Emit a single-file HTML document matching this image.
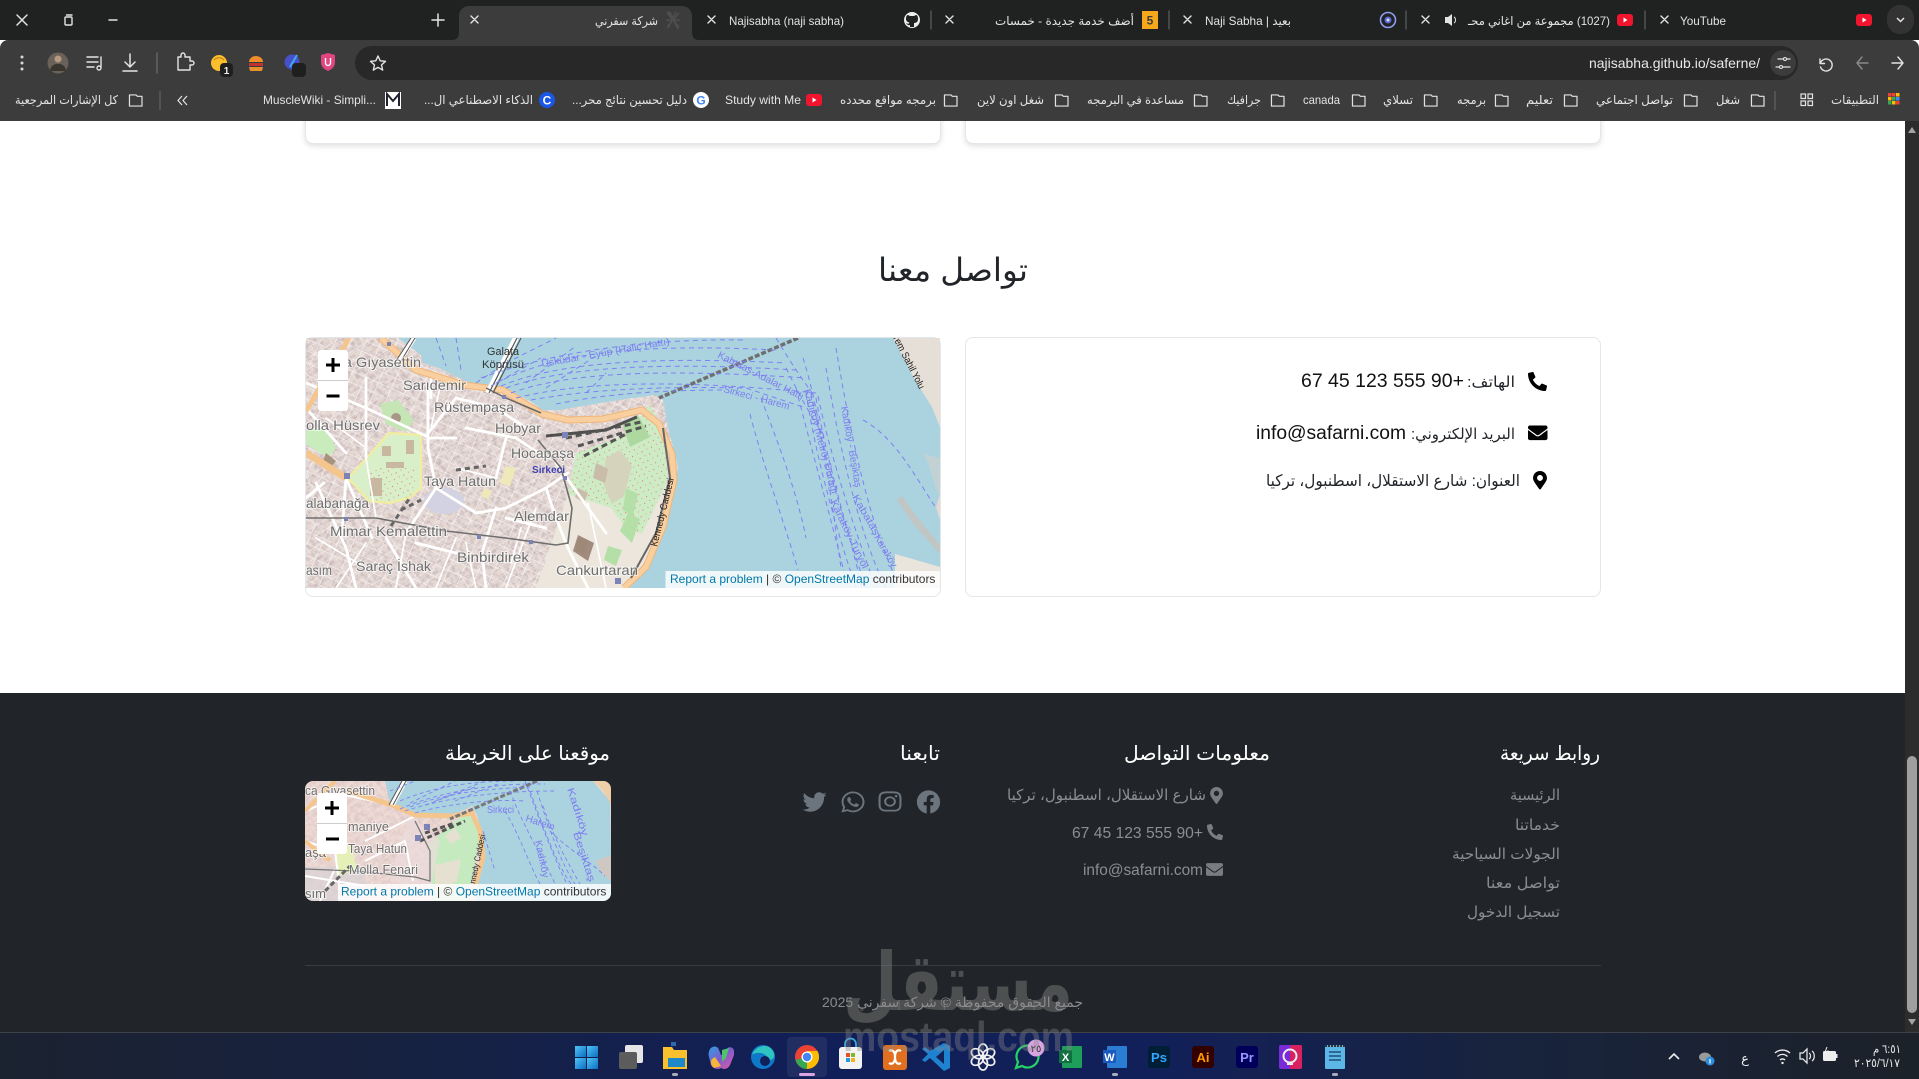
<!DOCTYPE html>
<html lang="ar"><head><meta charset="utf-8"><title>شركة سفرني</title>
<style>
html,body{margin:0;padding:0;width:1919px;height:1079px;overflow:hidden;background:#fff}
body{position:relative;font-family:"Liberation Sans","DejaVu Sans",sans-serif}
.a{position:absolute}
svg text{font-family:"Liberation Sans","DejaVu Sans",sans-serif}
.r{direction:rtl}
.card{position:absolute;background:#fff;border:1px solid #e3e6ea;border-radius:8px;box-sizing:border-box}
.lb{font-size:14px;fill:#6e6e6e;paint-order:stroke;stroke:rgba(255,255,255,.6);stroke-width:2px}
.fr{font-size:10px;fill:#7d7df0}
.rd{fill:none;stroke:#fff;stroke-linecap:round}
.fl{fill:none;stroke:#8080f2;stroke-width:1;stroke-dasharray:5 4}
.bm{font-size:12px;fill:#e3e3e3}
.tb{font-size:12px;fill:#e3e3e3}
.ic{fill:none;stroke:#e3e3e3;stroke-width:1.4;stroke-linecap:round;stroke-linejoin:round}
</style></head><body>

<svg width="0" height="0" class="a"><defs>
<filter id="noi" x="0" y="0" width="100%" height="100%"><feTurbulence type="fractalNoise" baseFrequency=".22" numOctaves="3" seed="7"/><feColorMatrix values="0 0 0 0 .52  0 0 0 0 .42  0 0 0 0 .44  2.600 0 0 0 -1.050"/></filter>
<pattern id="grd" width="14" height="11" patternUnits="userSpaceOnUse" patternTransform="rotate(24)"><path d="M0 0H14M0 0V11" stroke="#fff" stroke-width="1.300" fill="none"/></pattern>
<pattern id="grd2" width="19" height="9" patternUnits="userSpaceOnUse" patternTransform="rotate(-33)"><path d="M0 0H19M0 0V9" stroke="#fff" stroke-width="1" fill="none"/></pattern>
<pattern id="dot" width="8" height="7" patternUnits="userSpaceOnUse" patternTransform="rotate(15)"><circle cx="2" cy="2" r=".6" fill="#e8766e"/><circle cx="6" cy="5" r=".5" fill="#e8766e"/></pattern>
<symbol id="fo" viewBox="0 0 16 14"><path d="M15 2.500H10L8.500 1H1.500V13H15z" fill="none" stroke="#e3e3e3" stroke-width="1.300" stroke-linejoin="round"/></symbol>
<symbol id="yt" viewBox="0 0 16 12"><rect width="16" height="12" rx="3" fill="#f0142f"/><path d="M6.500 3.500v5l4-2.500z" fill="#fff"/></symbol>
<symbol id="ph" viewBox="0 0 512 512"><path transform="matrix(-1 0 0 1 512 0)" d="M493.400 24.600l-104-24c-11.300-2.600-22.900 3.300-27.500 13.900l-48 112c-4.200 9.800-1.400 21.300 6.900 28l60.600 49.600c-36 76.700-98.900 140.500-177.200 177.200l-49.600-60.600c-6.800-8.300-18.200-11.100-28-6.900l-112 48C3.900 366.500-2 378.100.6 389.400l24 104C27.100 504.200 36.700 512 48 512c256.100 0 464-207.500 464-464 0-11.200-7.700-20.900-18.600-23.400z"/></symbol>
<symbol id="en" viewBox="0 0 512 512"><path d="M502.300 190.800c3.900-3.100 9.700-.2 9.700 4.700V400c0 26.500-21.500 48-48 48H48c-26.500 0-48-21.500-48-48V195.600c0-5 5.700-7.800 9.700-4.700 22.400 17.400 52.100 39.500 154.100 113.600 21.100 15.400 56.700 47.800 92.200 47.600 35.700.3 72-32.800 92.300-47.600 102-74.100 131.600-96.300 154-113.700zM256 320c23.200.4 56.600-29.200 73.400-41.400 132.700-96.300 142.800-104.700 173.400-128.700 5.800-4.500 9.200-11.500 9.200-18.900v-19c0-26.500-21.500-48-48-48H48C21.500 64 0 85.500 0 112v19c0 7.400 3.400 14.300 9.200 18.900 30.600 23.900 40.700 32.400 173.400 128.700 16.800 12.200 50.200 41.800 73.400 41.400z"/></symbol>
<symbol id="pi" viewBox="0 0 384 512"><path d="M172.268 501.670C26.970 291.031 0 262.413 0 192 0 85.961 85.961 0 192 0s192 85.961 192 192c0 70.413-26.970 99.031-172.268 309.670-9.535 13.774-29.930 13.773-39.464 0zM192 272c44.183 0 80-35.817 80-80s-35.817-80-80-80-80 35.817-80 80 35.817 80 80 80z"/></symbol>
</defs></svg>

<!-- PAGE -->
<div class="card" style="left:305px;top:90px;width:636px;height:54px;box-shadow:0 2px 6px rgba(0,0,0,.13)"></div>
<div class="card" style="left:965px;top:90px;width:636px;height:54px;box-shadow:0 2px 6px rgba(0,0,0,.13)"></div>
<div class="card" style="left:305px;top:337px;width:636px;height:260px"></div>
<div class="card" style="left:965px;top:337px;width:636px;height:260px"></div>
<div class="a" style="left:0;top:693px;width:1905px;height:340px;background:#212529"></div>
<div class="a" style="left:305px;top:965px;width:1296px;height:1px;background:#383b40"></div>

<!-- MAIN MAP -->
<svg class="a" style="left:306px;top:338px" width="634" height="250" viewBox="0 0 634 250">
<defs><clipPath id="cm"><rect width="634" height="250"/></clipPath></defs>
<g clip-path="url(#cm)">
<rect width="634" height="250" fill="#e6d9d4"/>
<rect width="380" height="250" filter="url(#noi)" opacity=".75"/>
<rect width="380" height="250" fill="url(#grd)" opacity=".7"/>
<rect width="380" height="250" fill="url(#grd2)" opacity=".55"/>
<path d="M92 0L115 17 117 25 133 30 160 43 180 50 200 50 227 65 237 72 253 72 283 67 313 62 349 57 357 62 362 89 372 129 362 182 344 222 323 250H589V216L634 229V182L630 169 634 156V89L626 69 609 42 587 0z" fill="#aad3df"/>
<path d="M589 216L634 229V250H589z" fill="#e9e4dc"/>
<path d="M618 116l5 12 6 20 5 10V120z" fill="#d8d0ca" opacity=".5"/>
<path d="M591 162L604 182 630 212 634 216 634 207 620 190 606 172 596 158z" fill="#c8c0ba" opacity=".75"/>
<path d="M587 0L609 42 626 69 634 89V0z" fill="#e6dfd8"/>
<path d="M320 250L345 215 362 175 360 140 345 100 300 120 262 156 230 250z" fill="#ece6dc"/>
<path d="M344 66L357 92 362 142 336 196 320 190 305 170 262 156 270 115 322 96z" fill="#cdecc6"/>
<path d="M344 66L357 92 362 142 336 196 320 190 305 170 262 156 270 115 322 96z" fill="url(#dot)"/>
<path d="M300 120l14-8 12 16-8 30-12 8-10-24z" fill="#d6d3bd"/>
<path d="M316 85l16-8 12 22-20 10z" fill="#add8a0"/>
<path d="M290 125l12 6-3 14-12-5zM272 150l10 5-4 10-9-6z" fill="#c9bca8"/>
<path d="M322 175l12 6-8 24-12-12zM302 208l14 4-6 16-12-6zM320 150l12 6-5 22-10-6z" fill="#b4dfa6"/>
<path d="M272 197l16 8-6 18-15-10z" fill="#a08b7e"/>
<path d="M0 93l18-5 12 22-8 10-22-14z" fill="#c9ecbc"/>
<path d="M20 115l10 8-5 6-8-6z" fill="#a8937f"/>
<path d="M83 95L115 97 115 150 103 160 83 165 63 163 42 140 58 123z" fill="#d9efc9"/>
<path d="M60 130h50v26l-10 6-18 2-18-2z" fill="url(#dot)"/>
<path d="M76 108h9v10h-9zM100 102h8v14h-8zM80 124h18v6H80zM64 140h12v18H64z" fill="#c8b8a2"/>
<path d="M83 95L115 97 115 150 103 160 83 165 63 163 42 140 58 123z" fill="none" stroke="#f2ee9e" stroke-width="2.200"/>
<path d="M74 66l18-4 16 20-8 12-20-8z" fill="#c5e6b4"/>
<circle cx="90" cy="80" r="5" fill="#a89686"/>
<ellipse cx="138" cy="163" rx="20" ry="13" fill="#d2d2e2"/>
<path d="M200 128l10 2-6 18-10-3zM178 150l8 3-4 8-7-3z" fill="#efe8b8"/>
<path d="M272 200l10 2-4 14-8-4z" fill="#9f8878"/>
<g class="rd">
<path d="M0 45L60 70 120 98 150 60 190 70 220 90M60 40L60 120M122 50L122 110 130 150 100 195M0 70L40 115M10 145L40 210 50 250M40 140L36 195M130 150L170 175 200 170 240 150 262 135M190 170L176 215 180 250M240 150L250 180 262 210 282 250M160 90L210 100 240 120M200 180L240 190M80 200L110 250M110 205L150 215M200 100L190 140M18 145L0 160M250 125L300 195M40 140L66 200M125 60L125 40M122 100L150 100" stroke-width="2.800"/>
<path d="M10 200L60 230M60 205L30 250M150 200L130 250M230 170L200 250M282 165L300 250M135 45L125 90M20 80L60 110M150 130L190 140M215 190L205 225M70 180L60 120M100 195L90 250M160 205L170 250" stroke-width="1.700"/>
</g>
<path d="M75 0L110 32 158 47 197 52 236 76 262 82 297 81 336 72 353 86 366 116 368 142 357 189 340 229 318 250" fill="none" stroke="#efb678" stroke-width="7"/>
<path d="M75 0L110 32 158 47 197 52 236 76 262 82 297 81 336 72 353 86 366 116 368 142 357 189 340 229 318 250" fill="none" stroke="#f9cf9f" stroke-width="5"/>
<path d="M0 115L40 140" stroke="#f4c58c" stroke-width="7"/>
<path d="M43 0L0 73" stroke="#f4c58c" stroke-width="5"/>
<path d="M210 0L182 55" stroke="#fff" stroke-width="6"/><path d="M211 0L183 55M215 0L187 55" stroke="#555" stroke-width="1.200"/>
<path d="M108 0L90 28" stroke="#fff" stroke-width="5"/><path d="M105 0L88 26M109 0L92 28" stroke="#555" stroke-width="1"/>
<path d="M0 180L70 180 140 193 200 200 250 207 262 205 266 170 255 130 232 102" fill="none" stroke="#6f6f6f" stroke-width="1.600"/>
<path d="M180 50L200 60 235 75" fill="none" stroke="#666" stroke-width="1.500"/>
<path d="M357 90L364 140 350 195 325 240" fill="none" stroke="#666" stroke-width="2"/>
<path d="M492 0L353 60" stroke="#6f6f6f" stroke-width="3.500" stroke-dasharray="5 2"/>
<path d="M240 98L300 92 331 79" stroke="#4f4f4f" stroke-width="3" fill="none"/>
<path d="M260 100L335 84M272 108L340 88M278 118L320 96" stroke="#555" stroke-width="3" stroke-dasharray="6 4" fill="none"/>
<path d="M95 172l20-10M85 188l20-30M150 132l30-4" stroke="#666" stroke-width="3" stroke-dasharray="5 4" fill="none"/>
<rect x="38" y="135" width="6" height="6" fill="#7c83b6"/><rect x="38" y="179" width="4" height="4" fill="#7c83b6"/><rect x="256" y="94" width="6" height="6" fill="#7c83b6"/>
<rect x="257" y="138" width="4" height="4" fill="#7c83b6"/><rect x="196" y="57" width="4" height="4" fill="#7c83b6"/><rect x="171" y="197" width="4" height="4" fill="#7c83b6"/>
<rect x="223" y="202" width="4" height="4" fill="#7c83b6"/><rect x="309" y="240" width="6" height="6" fill="#7c83b6"/><rect x="81" y="4" width="4" height="4" fill="#7c83b6"/>
<g class="fl">
<path d="M190 45C250 15 330 5 470 12M195 48C250 25 340 18 480 25M205 55C260 35 350 30 500 40M210 60C270 45 360 40 510 55M225 62C280 52 350 48 440 50L500 70M250 66C290 58 340 52 420 52M175 40C230 20 320 0 440 2M200 50C260 28 360 24 490 32"/>
<path d="M130 0L140 28M150 0L155 32M170 45L200 25 250 0M185 48L235 20M220 45L270 8M280 55L300 35M240 50L290 18"/>
<path d="M444 76C455 120 480 190 492 232M455 60C470 100 490 150 500 200M500 55C510 120 530 190 550 250M505 55C518 120 540 190 560 250M512 58C525 120 548 190 570 250M520 30C530 90 550 190 580 250M530 10C540 70 560 180 590 240M497 20C510 60 520 120 535 230M480 30C490 50 505 80 520 100M470 0C485 25 495 40 510 60M557 82C590 100 610 140 630 170M510 60C522 130 545 200 556 250M490 50C505 110 525 180 542 250"/>
</g>
<text class="lb" x="38" y="29">a</text>
<text class="lb" x="50" y="29" textLength="65" lengthAdjust="spacingAndGlyphs">Gıyasettin</text>
<text class="lb" x="97" y="52" textLength="63" lengthAdjust="spacingAndGlyphs">Sarıdemir</text>
<text class="lb" x="128" y="74" textLength="80" lengthAdjust="spacingAndGlyphs">Rüstempaşa</text>
<text class="lb" x="0" y="92" textLength="74" lengthAdjust="spacingAndGlyphs">olla Hüsrev</text>
<text class="lb" x="189" y="95" textLength="46" lengthAdjust="spacingAndGlyphs">Hobyar</text>
<text class="lb" x="205" y="120" textLength="63" lengthAdjust="spacingAndGlyphs">Hocapaşa</text>
<text x="226" y="135" font-size="10.500" font-weight="bold" fill="#3f3fb0" textLength="33" lengthAdjust="spacingAndGlyphs">Sirkeci</text>
<text class="lb" x="118" y="148" textLength="72" lengthAdjust="spacingAndGlyphs">Taya Hatun</text>
<text class="lb" x="0" y="170" textLength="63" lengthAdjust="spacingAndGlyphs">alabanağa</text>
<text class="lb" x="208" y="183" textLength="55" lengthAdjust="spacingAndGlyphs">Alemdar</text>
<text class="lb" x="24" y="198" textLength="117" lengthAdjust="spacingAndGlyphs">Mimar Kemalettin</text>
<text class="lb" x="151" y="224" textLength="72" lengthAdjust="spacingAndGlyphs">Binbirdirek</text>
<text class="lb" x="50" y="233" textLength="75" lengthAdjust="spacingAndGlyphs">Saraç İshak</text>
<text class="lb" x="0" y="237" textLength="26" lengthAdjust="spacingAndGlyphs">asım</text>
<text class="lb" x="250" y="237" textLength="82" lengthAdjust="spacingAndGlyphs">Cankurtaran</text>
<text x="181" y="17" font-size="11" fill="#333" textLength="32" lengthAdjust="spacingAndGlyphs">Galata</text>
<text x="176" y="30" font-size="11" fill="#333" textLength="42" lengthAdjust="spacingAndGlyphs">Köprüsü</text>
<text class="fr" transform="translate(236 29) rotate(-10)" textLength="130" lengthAdjust="spacingAndGlyphs">Üsküdar - Eyüp (Haliç Hattı)</text>
<text class="fr" transform="translate(411 19) rotate(27)" textLength="95" lengthAdjust="spacingAndGlyphs">Kabataş-Adalar Hattı</text>
<text class="fr" transform="translate(417 54) rotate(15)" textLength="68" lengthAdjust="spacingAndGlyphs">Sirkeci - Harem</text>
<text class="fr" transform="translate(498 52) rotate(75)" textLength="108" lengthAdjust="spacingAndGlyphs">Kadıköy (Metro) Durağı</text>
<text class="fr" transform="translate(535 69) rotate(80)" textLength="82" lengthAdjust="spacingAndGlyphs">Kadıköy - Beşiktaş</text>
<text class="fr" transform="translate(546 159) rotate(60)" textLength="45" lengthAdjust="spacingAndGlyphs">Kabataş</text>
<text class="fr" transform="translate(568 199) rotate(60)" textLength="36" lengthAdjust="spacingAndGlyphs">Karaköy</text>
<text class="fr" transform="translate(524 164) rotate(64)" textLength="75" lengthAdjust="spacingAndGlyphs">Karaköy-Turyol</text>
<text transform="translate(351 209) rotate(-76)" font-size="10" fill="#222" textLength="70" lengthAdjust="spacingAndGlyphs">Kennedy Caddesi</text>
<text transform="translate(587 0) rotate(63)" font-size="10" fill="#222" textLength="58" lengthAdjust="spacingAndGlyphs">rem Sahil Yolu</text>
<rect x="359.500" y="233" width="275" height="17" fill="#fff" fill-opacity=".82"/>
<text x="364" y="245" font-size="12" fill="#333"><tspan fill="#0078a8">Report a problem</tspan> | © <tspan fill="#0078a8">OpenStreetMap</tspan> contributors</text>
<rect x="12" y="12" width="30" height="61" rx="3" fill="#fff"/>
<path d="M12 42.500h30" stroke="#ccc"/>
<path d="M27 20v14M20 27h14M20.500 58h13" stroke="#000" stroke-width="3"/>
</g></svg>

<!-- CONTACT CARD + FOOTER TEXT -->
<svg class="a" style="left:0;top:0;pointer-events:none" width="1919" height="1033" viewBox="0 0 1919 1033">
<text x="1028" y="281" text-anchor="start" class="r" font-size="32" fill="#212529" textLength="150" lengthAdjust="spacingAndGlyphs">تواصل معنا</text>
<use href="#ph" x="1528" y="372" width="19" height="19" fill="#000"/>
<text x="1515" y="387" class="r" font-size="15" fill="#212529" textLength="48" lengthAdjust="spacingAndGlyphs">الهاتف:</text>
<text x="1464" y="387" class="r" font-size="19" fill="#111" textLength="163" lengthAdjust="spacingAndGlyphs">+90 555 123 45 67</text>
<use href="#en" x="1528" y="423" width="19.500" height="19.500" fill="#000"/>
<text x="1515" y="439" class="r" font-size="15" fill="#212529" textLength="104" lengthAdjust="spacingAndGlyphs">البريد الإلكتروني:</text>
<text x="1256" y="439" font-size="19" fill="#111" textLength="150" lengthAdjust="spacingAndGlyphs">info@safarni.com</text>
<use href="#pi" x="1533" y="471" width="14" height="18.500" fill="#000"/>
<text x="1520" y="486" class="r" font-size="16" fill="#212529" textLength="254" lengthAdjust="spacingAndGlyphs">العنوان: شارع الاستقلال، اسطنبول، تركيا</text>

<g fill="#fff" font-size="20">
<text x="1600" y="760" class="r" textLength="100" lengthAdjust="spacingAndGlyphs">روابط سريعة</text>
<text x="1270" y="760" class="r" textLength="146" lengthAdjust="spacingAndGlyphs">معلومات التواصل</text>
<text x="940" y="760" class="r" textLength="40" lengthAdjust="spacingAndGlyphs">تابعنا</text>
<text x="610" y="760" class="r" textLength="165" lengthAdjust="spacingAndGlyphs">موقعنا على الخريطة</text>
</g>
<g fill="#8b8e91" font-size="15">
<text x="1560" y="800" class="r" textLength="50" lengthAdjust="spacingAndGlyphs">الرئيسية</text>
<text x="1560" y="830" class="r" textLength="45" lengthAdjust="spacingAndGlyphs">خدماتنا</text>
<text x="1560" y="859" class="r" textLength="108" lengthAdjust="spacingAndGlyphs">الجولات السياحية</text>
<text x="1560" y="888" class="r" textLength="74" lengthAdjust="spacingAndGlyphs">تواصل معنا</text>
<text x="1560" y="917" class="r" textLength="93" lengthAdjust="spacingAndGlyphs">تسجيل الدخول</text>
<text x="1206" y="800" class="r" textLength="199" lengthAdjust="spacingAndGlyphs">شارع الاستقلال، اسطنبول، تركيا</text>
<text x="1203" y="838" class="r" font-size="16" textLength="131" lengthAdjust="spacingAndGlyphs">+90 555 123 45 67</text>
<text x="1083" y="875" font-size="16" textLength="120" lengthAdjust="spacingAndGlyphs">info@safarni.com</text>
</g>
<g fill="#7a7d80">
<use href="#pi" x="1210" y="787" width="13" height="17"/>
<use href="#ph" x="1207" y="824" width="16" height="16"/>
<use href="#en" x="1206" y="861" width="17" height="17"/>
</g>
<g fill="#6c757d">
<svg x="916.500" y="790" width="24" height="24" viewBox="0 0 512 512"><path d="M504 256C504 119 393 8 256 8S8 119 8 256c0 123.780 90.690 226.380 209.250 245V327.690h-63V256h63v-54.640c0-62.150 37-96.480 93.670-96.480 27.140 0 55.520 4.840 55.520 4.840v61h-31.280c-30.800 0-40.410 19.120-40.410 38.730V256h68.780l-11 71.690h-57.780V501C413.310 482.380 504 379.780 504 256z"/></svg>
<svg x="878.500" y="790" width="23" height="23" viewBox="0 0 448 512" preserveAspectRatio="none"><path d="M224.100 141c-63.600 0-114.900 51.300-114.900 114.900s51.300 114.900 114.900 114.900S339 319.500 339 255.900 287.700 141 224.100 141zm0 189.600c-41.100 0-74.700-33.500-74.700-74.700s33.500-74.700 74.700-74.700 74.700 33.500 74.700 74.700-33.600 74.700-74.700 74.700zm146.400-194.300c0 14.900-12 26.800-26.800 26.800-14.900 0-26.800-12-26.800-26.800s12-26.800 26.800-26.800 26.800 12 26.800 26.800zm76.100 27.200c-1.700-35.900-9.900-67.700-36.200-93.900-26.200-26.200-58-34.400-93.900-36.200-37-2.100-147.900-2.100-184.900 0-35.800 1.700-67.600 9.900-93.900 36.100s-34.400 58-36.200 93.900c-2.100 37-2.100 147.900 0 184.900 1.700 35.900 9.900 67.700 36.200 93.900s58 34.400 93.900 36.200c37 2.100 147.900 2.100 184.900 0 35.900-1.700 67.700-9.900 93.900-36.200 26.200-26.200 34.400-58 36.200-93.900 2.100-37 2.100-147.800 0-184.800zM398.800 388c-7.800 19.600-22.900 34.700-42.600 42.600-29.500 11.700-99.500 9-132.100 9s-102.700 2.600-132.100-9c-19.600-7.800-34.700-22.900-42.600-42.600-11.700-29.500-9-99.500-9-132.100s-2.600-102.700 9-132.100c7.800-19.600 22.900-34.700 42.600-42.600 29.500-11.700 99.500-9 132.100-9s102.700-2.600 132.100 9c19.600 7.800 34.700 22.900 42.600 42.600 11.700 29.500 9 99.500 9 132.100s2.700 102.700-9 132.100z"/></svg>
<svg x="841.500" y="790" width="23" height="24" viewBox="0 0 448 512" preserveAspectRatio="none"><path d="M380.900 97.100C339 55.100 283.200 32 223.900 32c-122.400 0-222 99.600-222 222 0 39.100 10.200 77.300 29.600 111L0 480l117.700-30.900c32.400 17.700 68.900 27 106.100 27h.1c122.300 0 224.100-99.600 224.100-222 0-59.300-25.200-115-67.100-157zm-157 341.600c-33.200 0-65.700-8.900-94-25.700l-6.700-4-69.800 18.300L72 359.200l-4.400-7c-18.500-29.400-28.200-63.300-28.200-98.200 0-101.700 82.800-184.500 184.600-184.500 49.300 0 95.600 19.200 130.400 54.100 34.800 34.900 56.200 81.200 56.100 130.500 0 101.800-84.900 184.600-186.600 184.600zm101.200-138.200c-5.500-2.800-32.800-16.200-37.900-18-5.100-1.900-8.800-2.800-12.500 2.800-3.700 5.600-14.300 18-17.600 21.800-3.200 3.700-6.500 4.200-12 1.400-32.600-16.300-54-29.100-75.500-66-5.700-9.800 5.700-9.100 16.300-30.300 1.800-3.700.9-6.900-.5-9.700-1.400-2.800-12.500-30.100-17.100-41.200-4.500-10.800-9.100-9.300-12.500-9.500-3.200-.2-6.900-.2-10.600-.2-3.700 0-9.700 1.400-14.800 6.900-5.100 5.600-19.400 19-19.400 46.300 0 27.300 19.900 53.700 22.600 57.400 2.800 3.700 39.100 59.700 94.800 83.800 35.200 15.200 49 16.500 66.600 13.900 10.700-1.600 32.800-13.400 37.400-26.400 4.600-13 4.600-24.100 3.200-26.400-1.300-2.500-5-3.900-10.500-6.600z"/></svg>
<svg x="802.500" y="790" width="24" height="24" viewBox="0 0 512 512"><path d="M459.370 151.716c.325 4.548.325 9.097.325 13.645 0 138.720-105.583 298.558-298.558 298.558-59.452 0-114.680-17.219-161.137-47.106 8.447.974 16.568 1.299 25.340 1.299 49.055 0 94.213-16.568 130.274-44.832-46.132-.975-84.792-31.188-98.112-72.772 6.498.974 12.995 1.624 19.818 1.624 9.421 0 18.843-1.300 27.614-3.573-48.081-9.747-84.143-51.980-84.143-102.985v-1.299c13.969 7.797 30.214 12.670 47.431 13.319-28.264-18.843-46.781-51.005-46.781-87.391 0-19.492 5.197-37.360 14.294-52.954 51.655 63.675 129.300 105.258 216.365 109.807-1.624-7.797-2.599-15.918-2.599-24.040 0-57.828 46.782-104.934 104.934-104.934 30.213 0 57.502 12.670 76.670 33.137 23.715-4.548 46.456-13.320 66.599-25.340-7.798 24.366-24.366 44.833-46.132 57.827 21.117-2.273 41.584-8.122 60.426-16.243-14.292 20.791-32.161 39.308-52.628 54.253z"/></svg>
</g>
<text x="1083" y="1007" class="r" font-size="14" fill="#8a8d90" textLength="261" lengthAdjust="spacingAndGlyphs">جميع الحقوق محفوظة © شركة سفرني 2025</text>
</svg>

<!-- SMALL MAP -->
<svg class="a" style="left:305px;top:781px;border-radius:8px" width="306" height="120" viewBox="0 0 306 120">
<rect width="306" height="120" fill="#ecd7d2"/>
<rect width="170" height="120" filter="url(#noi)" opacity=".35"/>
<rect width="170" height="120" fill="url(#grd2)" opacity=".35"/>
<path d="M80 0L85 22 110 34 148 34 167 25 172 34 177 54 178 77 170 120H306V74L305 20 288 0z" fill="#aad3df"/>
<path d="M288 0L305 20V0z" fill="#e6dfd8"/><path d="M288 0l10 10 8 14V0z" fill="#f4c58c" opacity=".6"/>
<path d="M290 80l8 14 8 6V74z" fill="#cfc8c2"/>
<path d="M165 30L175 54 170 84 163 120H128L123 64 150 40z" fill="#c6eabf"/>
<path d="M130 84l26-6-4 22-22 10zM140 55l10-8 6 10-10 6z" fill="#e5e0cf"/>
<path d="M105 35L135 60 125 110 85 100 95 60z" fill="#ebdcdc" opacity=".7"/>
<rect y="86" width="60" height="34" fill="#d9d3d6" opacity=".7"/>
<path d="M30 66l16-4 6 26-20 8z" fill="#e4f0b8"/>
<path d="M0 30L40 14 87 24M0 60L30 70 35 110M60 60L110 35M60 80L100 60 108 100M0 95L60 105M15 120L30 88" stroke="#fff" stroke-width="2" fill="none"/>
<path d="M43 10L87 24 110 34 147 35 167 32 175 50 178 77 170 104" fill="none" stroke="#f4c58c" stroke-width="5"/>
<path d="M0 60L25 80M30 0L0 30" stroke="#f4c58c" stroke-width="4" fill="none"/>
<path d="M100 0L87 24" stroke="#fff" stroke-width="5"/><path d="M97 0L84 24M101 0L88 24" stroke="#555"/>
<path d="M0 88L50 90 110 96 125 100 125 70 110 40" fill="none" stroke="#777" stroke-width="1.300"/>
<path d="M232 0L145 38" stroke="#777" stroke-width="3" stroke-dasharray="5 2"/>
<path d="M120 52L150 42M115 60L160 40" stroke="#555" stroke-width="3" stroke-dasharray="5 3"/>
<path d="M20 110L45 85" stroke="#666" stroke-width="3" stroke-dasharray="5 3"/>
<rect x="119" y="43" width="6" height="6" fill="#7c83b6"/><rect x="110" y="54" width="6" height="6" fill="#7c83b6"/>
<g class="fl" style="stroke-width:.9;stroke-dasharray:4 3">
<path d="M95 28C140 8 200 2 240 3M100 30C145 15 200 10 250 10M110 32C145 22 190 18 220 20M95 20C130 5 170 0 210 0M105 26C140 12 180 8 225 6M200 30C215 55 225 85 235 103M205 10C220 50 240 80 250 103M220 0C235 40 250 80 262 103M225 10C240 50 250 80 266 103M232 10C245 50 255 80 270 103M238 25C250 60 262 80 275 103M245 50C265 70 285 80 300 95M178 50L190 90M85 10L110 0M105 22L150 0M130 20L180 0M120 24L170 6M150 20L195 2"/>
</g>
<text class="lb" style="font-size:13px" x="0" y="14" textLength="70" lengthAdjust="spacingAndGlyphs">ca Gıyasettin</text>
<text class="lb" style="font-size:13px" x="43" y="50" textLength="41" lengthAdjust="spacingAndGlyphs">maniye</text>
<text class="lb" style="font-size:13px" x="43" y="72" textLength="59" lengthAdjust="spacingAndGlyphs">Taya Hatun</text>
<text class="lb" style="font-size:13px" x="44" y="93" textLength="69" lengthAdjust="spacingAndGlyphs">Molla Fenari</text>
<text class="lb" style="font-size:13px" x="0" y="76">aşa</text>
<text class="lb" style="font-size:13px" x="0" y="117">sım</text>
<text class="fr" x="182" y="32" textLength="27" lengthAdjust="spacingAndGlyphs">Sirkeci</text>
<text class="fr" transform="translate(220 40) rotate(18)" textLength="30" lengthAdjust="spacingAndGlyphs">Harem</text>
<text class="fr" transform="translate(262 8) rotate(72)" textLength="50" lengthAdjust="spacingAndGlyphs">Kadıköy</text>
<text class="fr" transform="translate(268 52) rotate(72)" textLength="52" lengthAdjust="spacingAndGlyphs">Beşiktaş</text>
<text class="fr" transform="translate(230 60) rotate(78)" textLength="38" lengthAdjust="spacingAndGlyphs">Kadıköy</text>
<text transform="translate(170 103) rotate(-78)" font-size="8.500" fill="#222" textLength="50" lengthAdjust="spacingAndGlyphs">nnedy Caddesi</text>
<rect x="33" y="103" width="273" height="17" fill="#fff" fill-opacity=".82"/>
<text x="36" y="114.500" font-size="12" fill="#333"><tspan fill="#0078a8">Report a problem</tspan> | © <tspan fill="#0078a8">OpenStreetMap</tspan> contributors</text>
<rect x="12" y="12" width="30" height="61" rx="3" fill="#fff"/>
<path d="M12 42.500h30" stroke="#ccc"/>
<path d="M27 20v14M20 27h14M21 58h13" stroke="#000" stroke-width="3"/>
</svg>

<!-- SCROLLBAR -->
<div class="a" style="left:1905px;top:121px;width:14px;height:912px;background:#2c2c2c"></div>
<div class="a" style="left:1907px;top:756px;width:10px;height:257px;background:#9f9f9f;border-radius:5px"></div>
<svg class="a" style="left:1905px;top:121px" width="14" height="912"><path d="M3 12l4-6 4 6z" fill="#a3a3a3"/><path d="M3 898l4 6 4-6z" fill="#a3a3a3"/></svg>

<!-- BROWSER CHROME -->
<svg class="a" style="left:0;top:0" width="1919" height="121" viewBox="0 0 1919 121">
<rect width="1919" height="40" fill="#202222"/>
<path d="M0 121V48a8 8 0 0 1 8-8H1911a8 8 0 0 1 8 8V121z" fill="#3c3c3c"/>
<path d="M452 40c5 0 7-3 7-8V16a10 10 0 0 1 10-10H682a10 10 0 0 1 10 10V32c0 5 2 8 7 8z" fill="#3c3c3c"/>
<rect x="355" y="46" width="1443" height="34" rx="17" fill="#282828"/>
<circle cx="1783" cy="63" r="13" fill="#3c3c3c"/>
<g class="ic">
<path d="M17 15l10 10M27 15l-10 10" stroke-width="1.500"/>
<rect x="65" y="17" width="7" height="8" rx="1"/><path d="M66.500 15h5.500"/>
<path d="M109 20h8"/>
<path d="M432 20h12M438 14v12" stroke-width="1.500"/>
<path d="M471 16l7 7M478 16l-7 7M708 16l7 7M715 16l-7 7M946 16l7 7M953 16l-7 7M1184 16l7 7M1191 16l-7 7M1422 16l7 7M1429 16l-7 7M1661 16l7 7M1668 16l-7 7"/>
<path d="M931 11v18M1169 11v18M1406 11v18M1645 11v18" stroke="#555"/>
</g>
<rect x="1887" y="5" width="27" height="29" rx="13" fill="#333"/>
<path d="M1897 18l3.500 3.500 3.500-3.500" fill="none" stroke="#e3e3e3" stroke-width="1.500"/>
<g class="tb">
<text x="658" y="25" class="r" textLength="63" lengthAdjust="spacingAndGlyphs">شركة سفرني</text>
<text x="729" y="25" textLength="115" lengthAdjust="spacingAndGlyphs">Najisabha (naji sabha)</text>
<text x="1134" y="25" class="r" textLength="139" lengthAdjust="spacingAndGlyphs">أضف خدمة جديدة - خمسات</text>
<text x="1205" y="25" textLength="86" lengthAdjust="spacingAndGlyphs">Naji Sabha | بعيد</text>
<text x="1610" y="25" class="r" textLength="142" lengthAdjust="spacingAndGlyphs">(1027) مجموعة من اغاني محـ</text>
<text x="1680" y="25" textLength="46" lengthAdjust="spacingAndGlyphs">YouTube</text>
</g>
<!-- favicons -->
<path d="M667 13l12 14M679 13l-12 14M668 11l4 8M678 29l-4-8M666 20h14M670 12l8 16M676 12l-8 16" stroke="#4e4e4e" stroke-width="1.600" fill="none"/>
<circle cx="912" cy="20" r="8" fill="#eee"/><path d="M906 19c0-3 1-4 2-4l2 1h4l2-1c1 0 2 1 2 4 0 3-2 4-4 4v4h-4v-2c-2 .5-3-.5-4-2 1 .5 2 1 3 .5 0-.5 0-1 .5-1-2-.5-3.500-1.500-3.500-3.500z" fill="#202222"/>
<rect x="1142" y="11" width="16" height="18" fill="#f5a81c"/><text x="1150" y="24.500" text-anchor="middle" font-size="12" font-weight="bold" fill="#3c3c3c">5</text>
<circle cx="1388" cy="20" r="7.500" fill="none" stroke="#8f9cf0" stroke-width="1.600"/><circle cx="1388" cy="20" r="3.500" fill="#5866d8"/><circle cx="1388" cy="20" r="1.500" fill="#ddd"/>
<path d="M1445 17h3l4-3v12l-4-3h-3z" fill="#e3e3e3"/><path d="M1454 17c2 1 2 5 0 6" stroke="#e3e3e3" fill="none"/>
<use href="#yt" x="1617" y="14" width="16" height="12"/>
<use href="#yt" x="1856" y="14" width="16" height="12"/>
<!-- toolbar icons -->
<g fill="#d8d8d8"><circle cx="22" cy="57" r="1.500"/><circle cx="22" cy="63" r="1.500"/><circle cx="22" cy="69" r="1.500"/></g>
<circle cx="58" cy="63" r="10.500" fill="#6a625a"/><circle cx="58" cy="59" r="3.500" fill="#b89a80"/><path d="M50 71c1-6 4-7 8-7s7 1 8 7z" fill="#39352f"/>
<g class="ic">
<path d="M87 57h11M87 62h11M87 67h7M101 57v10"/><circle cx="99" cy="68" r="2"/>
<path d="M130 54v13M125 62l5 5 5-5M123 71h14" stroke-width="1.500"/>
<path d="M157 53v20" stroke="#666"/>
<path d="M178 57h3v-2a2 2 0 0 1 4 0v2h5v4h2a2 2 0 0 1 0 4h-2v5h-12z"/>
</g>
<circle cx="219" cy="63" r="8" fill="#fdbe2d"/><path d="M214 60c3-3 7-3 10 0" fill="none" stroke="#b87c10"/>
<rect x="220" y="63" width="13" height="14" rx="4" fill="#1f1f1f"/><text x="226.500" y="74" text-anchor="middle" font-size="10" font-weight="bold" fill="#eee">1</text>
<path d="M249 62a7 6 0 0 1 14 0z" fill="#f08c2a"/><rect x="249" y="63" width="14" height="3" fill="#b33"/><path d="M249 67h14l-1 4h-12z" fill="#e8912c"/>
<circle cx="292" cy="62" r="7.500" fill="#4750c8"/><path d="M290 67l7-12" stroke="#3fa9f5" stroke-width="2"/>
<rect x="292" y="63" width="14" height="14" rx="4" fill="#1f1f1f"/>
<path d="M321 55l7-2 7 2v7c0 5-3 7-7 9-4-2-7-4-7-9z" fill="#e0457f"/><path d="M325.500 58v5a2.500 2.500 0 0 0 5 0v-5" fill="none" stroke="#fff" stroke-width="1.400"/>
<path d="M378 56l2.200 4.800 5.300.5-4 3.600 1.200 5.200-4.700-2.800-4.700 2.800 1.200-5.200-4-3.600 5.300-.5z" class="ic"/>
<text x="1760" y="68" font-size="14" fill="#e8e8e8" text-anchor="end" textLength="171" lengthAdjust="spacingAndGlyphs">najisabha.github.io/saferne/</text>
<g class="ic">
<path d="M1778 59h5M1787 59h3M1776 67h3M1783 67h7" stroke-width="1.200"/><circle cx="1785" cy="59" r="1.500" stroke-width="1.100"/><circle cx="1781" cy="67" r="1.500" stroke-width="1.100"/>
<path d="M1820 59v4.500h4.500M1820.500 63a6 6 0 1 1 0 4"/>
<path d="M1862 57l-5 6 5 6M1857 63h11" stroke="#8a8a8a"/>
<path d="M1898 57l5 6-5 6M1903 63h-11"/>
</g>
<!-- bookmarks -->
<g class="bm">
<text x="118" y="104" class="r" textLength="103" lengthAdjust="spacingAndGlyphs">كل الإشارات المرجعية</text>
<text x="263" y="104" textLength="113" lengthAdjust="spacingAndGlyphs">MuscleWiki - Simpli...</text>
<text x="533" y="104" class="r" textLength="109" lengthAdjust="spacingAndGlyphs">الذكاء الاصطناعي ال...</text>
<text x="687" y="104" class="r" textLength="115" lengthAdjust="spacingAndGlyphs">دليل تحسين نتائج محر...</text>
<text x="725" y="104" textLength="76" lengthAdjust="spacingAndGlyphs">Study with Me</text>
<text x="936" y="104" class="r" textLength="96" lengthAdjust="spacingAndGlyphs">برمجه مواقع محدده</text>
<text x="1044" y="104" class="r" textLength="67" lengthAdjust="spacingAndGlyphs">شغل اون لاين</text>
<text x="1184" y="104" class="r" textLength="97" lengthAdjust="spacingAndGlyphs">مساعدة في البرمجه</text>
<text x="1261" y="104" class="r" textLength="34" lengthAdjust="spacingAndGlyphs">جرافيك</text>
<text x="1303" y="104" textLength="37" lengthAdjust="spacingAndGlyphs">canada</text>
<text x="1413" y="104" class="r" textLength="30" lengthAdjust="spacingAndGlyphs">تسلاي</text>
<text x="1486" y="104" class="r" textLength="29" lengthAdjust="spacingAndGlyphs">برمجه</text>
<text x="1553" y="104" class="r" textLength="27" lengthAdjust="spacingAndGlyphs">تعليم</text>
<text x="1673" y="104" class="r" textLength="77" lengthAdjust="spacingAndGlyphs">تواصل اجتماعي</text>
<text x="1740" y="104" class="r" textLength="24" lengthAdjust="spacingAndGlyphs">شغل</text>
<text x="1879" y="104" class="r" textLength="48" lengthAdjust="spacingAndGlyphs">التطبيقات</text>
</g>
<use href="#fo" x="128" y="94" width="15" height="13"/><use href="#fo" x="943" y="94" width="15" height="13"/><use href="#fo" x="1054" y="94" width="15" height="13"/><use href="#fo" x="1193" y="94" width="15" height="13"/><use href="#fo" x="1270" y="94" width="15" height="13"/><use href="#fo" x="1351" y="94" width="15" height="13"/><use href="#fo" x="1423" y="94" width="15" height="13"/><use href="#fo" x="1494" y="94" width="15" height="13"/><use href="#fo" x="1563" y="94" width="15" height="13"/><use href="#fo" x="1683" y="94" width="15" height="13"/><use href="#fo" x="1750" y="94" width="15" height="13"/>
<path d="M160 91v19M1775 91v19" stroke="#6a6a6a"/>
<path d="M187 96l-4 4.500 4 4.500M182 96l-4 4.500 4 4.500" fill="none" stroke="#e3e3e3" stroke-width="1.200"/>
<rect x="385" y="92" width="16" height="17" fill="#fff"/><path d="M387 106V94l6 7 6-7v12" fill="none" stroke="#223" stroke-width="2"/>
<circle cx="547" cy="100" r="8" fill="#1a56e8"/><text x="547" y="104.500" text-anchor="middle" font-size="12" font-weight="bold" fill="#fff">C</text>
<circle cx="701" cy="100" r="8" fill="#fff"/><text x="701" y="104.500" text-anchor="middle" font-size="12" font-weight="bold" fill="#4285f4">G</text>
<use href="#yt" x="806" y="94" width="16" height="12"/>
<g fill="none" stroke="#e3e3e3" stroke-width="1.200"><rect x="1801" y="94" width="4.500" height="4.500"/><rect x="1808" y="94" width="4.500" height="4.500"/><rect x="1801" y="101" width="4.500" height="4.500"/><rect x="1808" y="101" width="4.500" height="4.500"/></g>
<g><rect x="1888" y="93" width="3.500" height="3.500" fill="#ea4335"/><rect x="1892" y="93" width="3.500" height="3.500" fill="#ea4335"/><rect x="1896" y="93" width="3.500" height="3.500" fill="#fbbc04"/><rect x="1888" y="97" width="3.500" height="3.500" fill="#fbbc04"/><rect x="1892" y="97" width="3.500" height="3.500" fill="#34a853"/><rect x="1896" y="97" width="3.500" height="3.500" fill="#4285f4"/><rect x="1888" y="101" width="3.500" height="3.500" fill="#34a853"/><rect x="1892" y="101" width="3.500" height="3.500" fill="#fbbc04"/><rect x="1896" y="101" width="3.500" height="3.500" fill="#ea4335"/></g>
</svg>

<!-- TASKBAR -->
<svg class="a" style="left:0;top:1032px" width="1919" height="47" viewBox="0 0 1919 47">
<defs>
<linearGradient id="tg" x1="0" x2="1" y1="0" y2="0"><stop offset="0" stop-color="#1b2230"/><stop offset=".2" stop-color="#172240"/><stop offset=".42" stop-color="#111f58"/><stop offset=".6" stop-color="#12205a"/><stop offset=".78" stop-color="#18233e"/><stop offset="1" stop-color="#1c2229"/></linearGradient>
<linearGradient id="ch1" x1="0" x2="1" y1="0" y2="1"><stop offset="0" stop-color="#4fc3f7"/><stop offset="1" stop-color="#0c6fc0"/></linearGradient>
<linearGradient id="cop" x1="0" x2="1" y1="0" y2="1"><stop offset="0" stop-color="#2f9fe0"/><stop offset=".5" stop-color="#7e5bd0"/><stop offset="1" stop-color="#e85aa0"/></linearGradient>
</defs>
<rect width="1919" height="47" fill="url(#tg)"/>
<rect width="1919" height="1" fill="#3e4349"/>
<rect x="787" y="5" width="40" height="40" rx="4" fill="#fff" opacity=".07"/>
<rect x="799" y="41" width="16" height="3" rx="1.500" fill="#d9a5e0"/>
<rect x="672" y="41" width="6" height="3" rx="1.500" fill="#aab"/><rect x="1112" y="41" width="6" height="3" rx="1.500" fill="#aab"/><rect x="1332" y="41" width="6" height="3" rx="1.500" fill="#aab"/>
<g fill="url(#ch1)"><rect x="575" y="14" width="11" height="11"/><rect x="587" y="14" width="11" height="11"/><rect x="575" y="26" width="11" height="11"/><rect x="587" y="26" width="11" height="11"/></g>
<rect x="625" y="13" width="18" height="18" rx="2" fill="#e6e6e6"/><rect x="619" y="20" width="18" height="17" rx="2" fill="#5c5c5c"/>
<path d="M663 15h9l2 3h13v19h-24z" fill="#fbc02d"/><rect x="668" y="26" width="17" height="9" fill="#1e88c8"/><rect x="671" y="10" width="5" height="4" fill="#2c72b8" opacity=".9"/>
<!-- copilot -->
<path d="M710 17c3-4 8-3 9 1l2 5h4l2-6c1-3 7-2 7 2v4l-4 10c-2 4-6 5-9 3-2 2-8 1-10-3l-2-8c-1-3 0-6 1-8z" fill="url(#cop)"/><path d="M715 25l6 9-7 2c-3-2-4-6-2-9z" fill="#f5b53a"/><path d="M722 18l7-2-3 10-4 4z" fill="#4fc26a"/>
<!-- edge -->
<circle cx="763" cy="25" r="12" fill="#0f78c8"/><path d="M752 23c3-10 18-13 22-2 1 4-1 7-5 7-3 0-1-4-5-6-5-2-10-1-12 1z" fill="#2ec4c0"/><circle cx="765" cy="29" r="5" fill="#12205a"/>
<!-- chrome -->
<circle cx="807" cy="25" r="12" fill="#ea4335"/><path d="M807 37a12 12 0 0 0 10.500-18H807z" fill="#fbbc04"/><path d="M795.500 28L807 25 807 37a12 12 0 0 1-11.500-9z" fill="#34a853"/><circle cx="807" cy="25" r="5.500" fill="#fff"/><circle cx="807" cy="25" r="4.200" fill="#4285f4"/>
<rect x="839" y="15" width="23" height="22" rx="3" fill="#f3f3f3"/><path d="M845 15v-3a5 5 0 0 1 11 0v3" fill="none" stroke="#39a8dc" stroke-width="1.800"/><rect x="846" y="21" width="4" height="4" fill="#e94e24"/><rect x="851" y="21" width="4" height="4" fill="#7db82d"/><rect x="846" y="26" width="4" height="4" fill="#1e9be0"/><rect x="851" y="26" width="4" height="4" fill="#f3b21a"/>
<!-- xampp -->
<rect x="883" y="13" width="24" height="25" rx="3" fill="#e0701f"/><path d="M889 19c3-2 6 0 6 6s3 8 6 6M901 19c-3-2-6 0-6 6s-3 8-6 6" fill="none" stroke="#fff" stroke-width="2.200"/>
<!-- vscode -->
<path d="M944 11l6 3v22l-6 3-14-13-5 4-3-2 6-6-6-5 3-2 5 4z" fill="#1f82d0"/><path d="M944 18l-8 7 8 7z" fill="#12205a"/>
<!-- chatgpt -->
<g fill="none" stroke="#f0f0f0" stroke-width="1.700"><ellipse cx="983" cy="18.500" rx="4.500" ry="6.500"/><ellipse cx="983" cy="31.500" rx="4.500" ry="6.500"/><ellipse cx="983" cy="18.500" rx="4.500" ry="6.500" transform="rotate(60 983 25)"/><ellipse cx="983" cy="18.500" rx="4.500" ry="6.500" transform="rotate(120 983 25)"/><ellipse cx="983" cy="18.500" rx="4.500" ry="6.500" transform="rotate(240 983 25)"/><ellipse cx="983" cy="18.500" rx="4.500" ry="6.500" transform="rotate(300 983 25)"/></g>
<!-- whatsapp -->
<path d="M1016 36l2-6a11 11 0 1 1 4 4z" fill="#12205a" stroke="#25d366" stroke-width="2.200"/>
<circle cx="1036" cy="16" r="8.500" fill="#d9a5e0"/><text x="1036" y="20" text-anchor="middle" font-size="10" fill="#333" class="r">٢٥</text>
<rect x="1062" y="14" width="20" height="22" rx="1" fill="#1f9e5a"/><rect x="1059" y="18" width="13" height="13" fill="#107040"/><text x="1065.500" y="29" text-anchor="middle" font-size="11" font-weight="bold" fill="#fff">X</text>
<rect x="1107" y="14" width="20" height="22" rx="1" fill="#2b7cd3"/><rect x="1103" y="18" width="13" height="13" fill="#185abd"/><text x="1109.500" y="29" text-anchor="middle" font-size="11" font-weight="bold" fill="#fff">W</text>
<rect x="1148" y="14" width="22" height="22" rx="3" fill="#001e36"/><text x="1159" y="30" text-anchor="middle" font-size="13" font-weight="bold" fill="#31a8ff">Ps</text>
<rect x="1192" y="14" width="22" height="22" rx="3" fill="#330000"/><text x="1203" y="30" text-anchor="middle" font-size="13" font-weight="bold" fill="#ff9a00">Ai</text>
<rect x="1236" y="14" width="22" height="22" rx="3" fill="#00005b"/><text x="1247" y="30" text-anchor="middle" font-size="13" font-weight="bold" fill="#9999ff">Pr</text>
<rect x="1279" y="13" width="23" height="24" rx="2" fill="#7a2bd8"/><rect x="1290" y="13" width="12" height="24" rx="2" fill="#e8204c" opacity=".85"/><circle cx="1290" cy="24" r="6.500" fill="none" stroke="#eee" stroke-width="2"/><path d="M1287 32h6" stroke="#eee" stroke-width="2"/>
<rect x="1325" y="13" width="20" height="24" rx="1" fill="#5cb6e6"/><path d="M1325 14h20" stroke="#333" stroke-dasharray="2 1" stroke-width="2"/><path d="M1329 20h12M1329 24h12M1329 28h12" stroke="#1e4f7a" stroke-width="1.500"/>
<path d="M1669 27l5-5 5 5" fill="none" stroke="#eee" stroke-width="1.600"/>
<ellipse cx="1705" cy="25" rx="6" ry="4.500" fill="#9a9a9a"/><circle cx="1710" cy="29" r="4.500" fill="#2a8fe0"/><rect x="1709.400" y="27" width="1.200" height="4.500" fill="#fff"/>
<text x="1745" y="31" text-anchor="middle" font-size="13" fill="#eee">ع</text>
<path d="M1775 21a11 11 0 0 1 15 0M1777.500 24.500a7 7 0 0 1 10 0M1780 28a3.500 3.500 0 0 1 5 0" fill="none" stroke="#eee" stroke-width="1.300"/><circle cx="1782.500" cy="31" r="1.200" fill="#eee"/>
<path d="M1800 21h3l4-4v14l-4-4h-3zM1809 21c2 1 2 5 0 6M1812 19c3 2 3 8 0 10" fill="none" stroke="#eee" stroke-width="1.200"/>
<rect x="1823" y="19" width="13" height="10" rx="1.500" fill="#eee"/><rect x="1836" y="22" width="1.500" height="4" fill="#eee"/><path d="M1827 15l-2 5 3-1-1 4" fill="none" stroke="#eee"/>
<text x="1901" y="21" class="r" font-size="12" fill="#e8e8e8" textLength="28" lengthAdjust="spacingAndGlyphs">٦:٥١ م</text>
<text x="1900" y="35" font-size="12" class="r" fill="#e8e8e8" textLength="46" lengthAdjust="spacingAndGlyphs">٢٠٢٥/٦/١٧</text>
</svg>

<!-- WATERMARK -->
<svg class="a" style="left:0;top:0;pointer-events:none" width="1919" height="1079">
<text x="1073" y="1010" class="r" font-size="80" font-weight="bold" fill="#8a8a8a" fill-opacity=".42" textLength="230" lengthAdjust="spacingAndGlyphs">مستقل</text>
<text x="843" y="1051" font-size="42" font-weight="bold" fill="#8a8a8a" fill-opacity=".38" textLength="231" lengthAdjust="spacingAndGlyphs">mostaql.com</text>
</svg>
</body></html>
